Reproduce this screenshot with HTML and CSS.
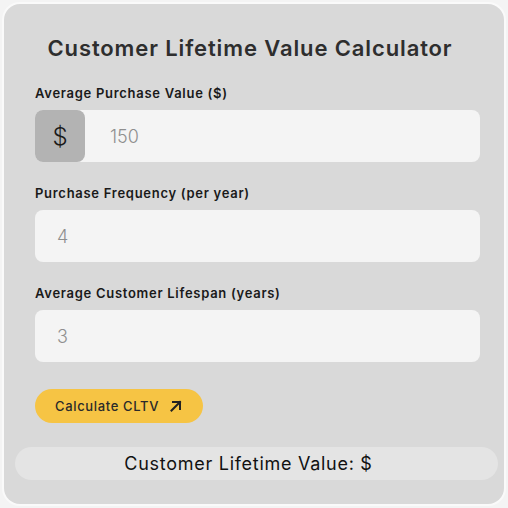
FILE: index.html
```html
<!DOCTYPE html>
<html>
<head>
<meta charset="utf-8">
<link rel="stylesheet" href="styles.css">
</head>
<body>
<div class="card">
  <h1 class="title">Customer Lifetime Value Calculator</h1>
  <div class="form">
    <label class="label">Average Purchase Value ($)</label>
    <div class="field">
      <span class="prefix">$</span>
      <span class="value value-prefixed">150</span>
    </div>
    <label class="label">Purchase Frequency (per year)</label>
    <div class="field">
      <span class="value">4</span>
    </div>
    <label class="label">Average Customer Lifespan (years)</label>
    <div class="field">
      <span class="value">3</span>
    </div>
    <button class="btn">Calculate CLTV
      <svg class="arrow" width="14" height="14" viewBox="0 0 14 14"><path d="M2.5 11.5 L11 3 M4 3 H11 V10" fill="none" stroke="#222" stroke-width="2" stroke-linecap="square"/></svg>
    </button>
  </div>
  <div class="result">Customer Lifetime Value: $</div>
</div>
</body>
</html>
```
FILE: styles.css
```css
* { box-sizing: border-box; }
html, body { margin: 0; }
body {
  background: #f4f4f4;
  padding: 4px;
  font-family: Inter, "Liberation Sans", sans-serif;
}
.card {
  width: 500px;
  height: 500px;
  background: #d9d9d9;
  border-radius: 16px;
  box-shadow: 0 0 0 2px #fafafa;
  padding-top: 31px;
}
.title {
  margin: 0;
  text-align: center;
  font-size: 22px;
  font-weight: 600;
  color: #2e2e2e;
  line-height: 26px;
  letter-spacing: 0.04em;
  padding-right: 8px;
}
.form {
  display: flex;
  flex-direction: column;
  align-items: flex-start;
  padding: 0 24px 0 31px;
  margin-top: 24px;
}
.label {
  font-size: 13px;
  font-weight: 600;
  color: #1a1a1a;
  line-height: 16px;
  letter-spacing: 0.055em;
  margin-bottom: 9px;
}
.field {
  width: 100%;
  height: 52px;
  background: #f4f4f4;
  border-radius: 8px;
  display: flex;
  align-items: center;
  margin-bottom: 23px;
}
.prefix {
  width: 50px;
  height: 52px;
  background: #b3b3b3;
  border-radius: 8px;
  display: flex;
  align-items: center;
  justify-content: center;
  font-size: 24px;
  font-weight: 300;
  color: #1a1a1a;
}
.value {
  font-size: 18px;
  font-weight: 300;
  color: #8f8f8f;
  padding-left: 22px;
}
.value-prefixed { padding-left: 25px; }
.btn {
  margin-top: 4px;
  height: 34px;
  width: 168px;
  border: none;
  border-radius: 17px;
  background: #f6c444;
  font-family: inherit;
  font-size: 13px;
  font-weight: 500;
  letter-spacing: 0.05em;
  color: #2a2a2a;
  display: flex;
  align-items: center;
  justify-content: flex-start;
  gap: 10px;
  padding: 0 0 0 20px;
}
.result {
  margin: 24px 6px 0 11px;
  height: 33px;
  border-radius: 17px;
  background: #e4e4e4;
  display: flex;
  align-items: center;
  justify-content: center;
  font-size: 18px;
  letter-spacing: 0.04em;
  color: #111;
  padding-right: 16px;
}
```
